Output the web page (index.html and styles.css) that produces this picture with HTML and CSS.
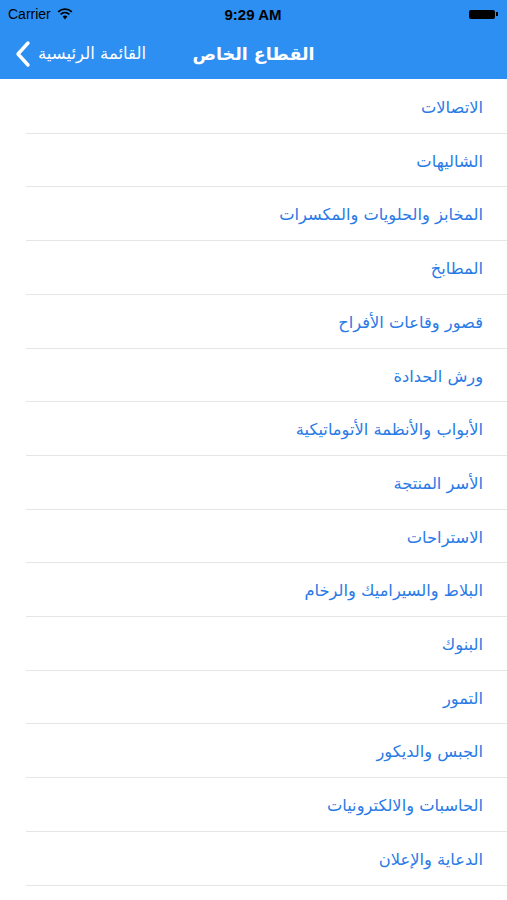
FILE: index.html
```html
<!DOCTYPE html>
<html>
<head>
    <title>القطاع الخاص</title>
    <link rel="stylesheet" href="styles.css">
</head>
<body>
    <div class="header">
        <div class="status-bar">
            <div class="status-left">
                <span>Carrier</span>
                <svg class="wifi" width="16" height="12" viewBox="0 0 16 12">
                    <path d="M8 11.5 L5.6 8.6 A3.8 3.8 0 0 1 10.4 8.6 Z" fill="#000"/>
                    <path d="M3.6 6.4 A6.6 6.6 0 0 1 12.4 6.4" stroke="#000" stroke-width="1.8" fill="none"/>
                    <path d="M1.2 3.8 A10 10 0 0 1 14.8 3.8" stroke="#000" stroke-width="1.8" fill="none"/>
                </svg>
            </div>
            <div class="status-time">9:29 AM</div>
            <div class="status-right">
                <span class="battery"></span>
                <span class="battery-nub"></span>
            </div>
        </div>
        <div class="nav-bar">
            <div class="nav-back">
                <svg width="18" height="28" viewBox="0 0 18 28">
                    <path d="M14 3 L4 14 L14 25" stroke="#fff" stroke-width="3.4" fill="none" stroke-linecap="round" stroke-linejoin="round"/>
                </svg>
                <span class="back-text">القائمة الرئيسية</span>
            </div>
            <div class="nav-title">القطاع الخاص</div>
            <div></div>
        </div>
    </div>

    <ul class="list">
        <li>الاتصالات</li>
        <li>الشاليهات</li>
        <li>المخابز والحلويات والمكسرات</li>
        <li>المطابخ</li>
        <li>قصور وقاعات الأفراح</li>
        <li>ورش الحدادة</li>
        <li>الأبواب والأنظمة الأتوماتيكية</li>
        <li>الأسر المنتجة</li>
        <li>الاستراحات</li>
        <li>البلاط والسيراميك والرخام</li>
        <li>البنوك</li>
        <li>التمور</li>
        <li>الجبس والديكور</li>
        <li>الحاسبات والالكترونيات</li>
        <li>الدعاية والإعلان</li>
    </ul>
</body>
</html>
```

FILE: styles.css
```css
body {
    margin: 0;
    background: #fff;
    font-family: "DejaVu Sans", "Noto Sans", sans-serif;
    overflow: hidden;
}
.header {
    background-color: #2d8ff1;
    height: 79px;
}
.status-bar {
    height: 28px;
    display: grid;
    grid-template-columns: 1fr auto 1fr;
    align-items: center;
    padding: 0 9px 0 8px;
    font-family: "Liberation Sans", Arial, sans-serif;
    color: #000;
}
.status-left {
    display: flex;
    align-items: center;
    gap: 6px;
    font-size: 14px;
}
.status-time {
    font-size: 15px;
    font-weight: bold;
}
.status-right {
    display: flex;
    justify-content: flex-end;
    align-items: center;
}
.battery {
    width: 26px;
    height: 9px;
    background: #000;
    border-radius: 2px;
}
.battery-nub {
    width: 2px;
    height: 4px;
    background: #000;
    margin-left: 1px;
}
.nav-bar {
    height: 51px;
    display: grid;
    grid-template-columns: 1fr auto 1fr;
    align-items: center;
    padding: 0 14px;
    color: #fff;
}
.nav-back {
    display: flex;
    align-items: center;
    gap: 6px;
}
.back-text {
    font-size: 16.5px;
}
.nav-title {
    font-size: 17.5px;
    font-weight: bold;
}
.list {
    list-style: none;
    margin: 0;
    padding: 1px 0 0;
}
.list li {
    direction: rtl;
    box-sizing: border-box;
    height: 53.71px;
    line-height: 49.71px;
    padding-top: 3px;
    border-bottom: 1px solid #e6e6e6;
    margin-left: 26px;
    padding-right: 24px;
    color: #2a7be6;
    font-size: 16.3px;
}
```
